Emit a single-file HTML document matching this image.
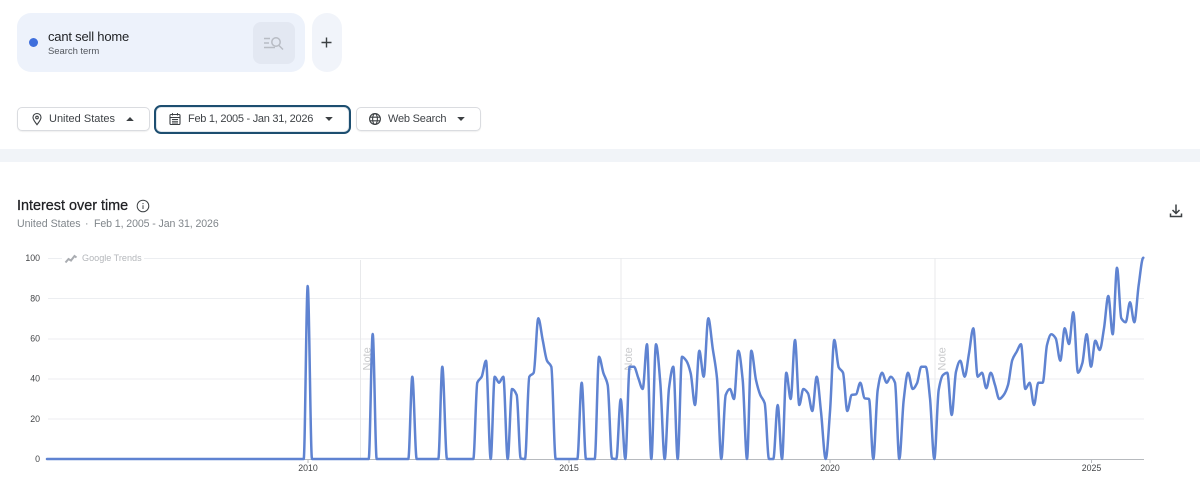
<!DOCTYPE html>
<html lang="en"><head><meta charset="utf-8"><title>Google Trends - cant sell home</title>
<style>
html,body{margin:0;padding:0;background:#fff}
body{width:1200px;height:487px;overflow:hidden;position:relative;font-family:"Liberation Sans",sans-serif;filter:blur(.35px)}
.a{position:absolute;white-space:nowrap}
.dd{position:absolute;top:107px;height:22px;border:1px solid #dadce0;border-radius:5px;background:#fff;box-shadow:0 1px 1px rgba(60,64,67,.08)}
.t{position:absolute;white-space:nowrap;font-size:11px;line-height:14px;color:#3f4347}
svg{position:absolute;overflow:visible}
</style></head><body>

<div class="a" style="left:17px;top:13px;width:288px;height:59px;border-radius:14px;background:#edf2fb"></div>
<div class="a" style="left:28.500px;top:37.500px;width:9px;height:9px;border-radius:50%;background:#3f6fdc"></div>
<div class="a" style="left:48px;top:29px;font-size:13px;line-height:15px;color:#1f2124;letter-spacing:-.2px">cant sell home</div>
<div class="a" style="left:48px;top:46px;font-size:9.500px;line-height:12px;color:#54585e;letter-spacing:-.05px">Search term</div>
<div class="a" style="left:253px;top:22px;width:42px;height:42px;border-radius:8px;background:#e3e8f2"></div>
<svg style="left:253px;top:22px" width="42" height="42" viewBox="0 0 42 42" fill="none" stroke="#b8bcc4" stroke-width="1.500">
<path d="M11 16.500h6M11 21h5M11 25.500h11"/><circle cx="23" cy="20" r="4.200"/><path d="M26 23.500l4 4"/></svg>
<div class="a" style="left:312px;top:13px;width:30px;height:59px;border-radius:15px;background:#f1f4fa"></div>
<svg style="left:320px;top:36px" width="13" height="13" viewBox="0 0 13 13" fill="none" stroke="#3c4043" stroke-width="1.400"><path d="M6.500 1.500v10M1.500 6.500h10"/></svg>

<div class="dd" style="left:17px;width:131px"></div>
<svg style="left:30px;top:112px" width="14" height="14" viewBox="0 0 14 14" fill="none" stroke="#3c4043" stroke-width="1.100"><path d="M7 1.500c-2.400 0-4 1.800-4 3.900C3 8 5.500 10.500 7 12.700c1.500-2.200 4-4.700 4-7.300 0-2.100-1.600-3.900-4-3.900z"/><circle cx="7" cy="5.500" r="1.300"/></svg>
<div class="t" style="left:49px;top:112px">United States</div>
<svg style="left:125px;top:116px" width="10" height="6" viewBox="0 0 10 6"><path d="M1.200 5L5 1l3.800 4z" fill="#3c4043"/></svg>

<div class="a" style="left:154px;top:105px;width:193px;height:25px;border:2px solid #1d4e70;border-radius:7px;background:#fff;box-shadow:inset 0 0 0 1px #dfe6ec"></div>
<svg style="left:168px;top:112px" width="14" height="14" viewBox="0 0 14 14" fill="none" stroke="#3c4043" stroke-width="1.100"><rect x="2" y="2.500" width="10" height="10" rx="1"/><path d="M2 5.500h10M4.500 1v2.500M9.500 1v2.500M4 7.500h6M4 9.300h6M4 11h6" stroke-width=".9"/></svg>
<div class="t" style="left:188px;top:112px;letter-spacing:-.27px">Feb 1, 2005 - Jan 31, 2026</div>
<svg style="left:324px;top:116px" width="10" height="6" viewBox="0 0 10 6"><path d="M1.200 1L5 5l3.800-4z" fill="#3c4043"/></svg>

<div class="dd" style="left:356px;width:123px"></div>
<svg style="left:368px;top:112px" width="14" height="14" viewBox="0 0 14 14" fill="none" stroke="#3c4043" stroke-width="1.100"><circle cx="7" cy="7" r="5.400"/><ellipse cx="7" cy="7" rx="2.400" ry="5.400"/><path d="M1.800 5.200h10.400M1.800 8.800h10.400"/></svg>
<div class="t" style="left:388px;top:112px;letter-spacing:-.2px">Web Search</div>
<svg style="left:456px;top:116px" width="10" height="6" viewBox="0 0 10 6"><path d="M1.200 1L5 5l3.800-4z" fill="#3c4043"/></svg>

<div class="a" style="left:0;top:149px;width:1200px;height:13px;background:#f1f4f8"></div>

<div class="a" style="left:17px;top:198px;font-size:14.400px;line-height:17px;color:#202124;-webkit-text-stroke:.25px #202124">Interest over time</div>
<svg style="left:136px;top:198.500px" width="14" height="14" viewBox="0 0 14 14" fill="none" stroke="#3c4043" stroke-width="1"><circle cx="7" cy="7" r="5.800"/><path d="M7 6.300v3.700M7 4v1.100"/></svg>
<div class="a" style="left:17px;top:217px;font-size:10.600px;line-height:14px;color:#80868b">United States</div>
<div class="a" style="left:85px;top:217px;font-size:10.600px;line-height:14px;color:#80868b">·</div>
<div class="a" style="left:94px;top:217px;font-size:10.600px;line-height:14px;color:#80868b;letter-spacing:-.1px">Feb 1, 2005 - Jan 31, 2026</div>
<svg style="left:1168px;top:203px" width="16" height="16" viewBox="0 0 16 16" fill="none" stroke="#3c4043" stroke-width="1.500"><path d="M8 1.500v8.500M4.500 7L8 10.500 11.500 7M2.500 10.500v3h11v-3"/></svg>

<svg style="left:0;top:0" width="1200" height="487" viewBox="0 0 1200 487">
<g stroke="#eceef1" stroke-width="1" fill="none">
<path d="M48 258.500H1144M48 298.500H1144M48 339H1144M48 379H1144M48 419H1144"/>
<path d="M360.500 260V459M621 258V459M935 258V459" stroke="#e8e9eb"/>
</g>
<rect x="62" y="252" width="82" height="13" fill="#fff"/>
<path d="M65.500 262.500l3-3.500 2.500 1.500 3.500-4.500 2 1.500" fill="none" stroke="#a9acb1" stroke-width="2"/>
<text x="82" y="261" font-size="9.100" fill="#b4b7bb" font-family="Liberation Sans, sans-serif">Google Trends</text>
<g font-size="11" fill="#c9cacc" font-family="Liberation Sans, sans-serif">
<text transform="translate(370.500 370.500) rotate(-90)">Note</text>
<text transform="translate(632 370.500) rotate(-90)">Note</text>
<text transform="translate(945.500 370.500) rotate(-90)">Note</text>
</g>
<path d="M47 459.500H1144" stroke="#b7babe" stroke-width="1"/>
<path d="M308 460v3M569 460v3M830 460v3M1091.500 460v3" stroke="#b7babe" stroke-width="1"/>
<g font-size="8.800" fill="#444649" font-family="Liberation Sans, sans-serif" text-anchor="end">
<text x="40" y="261">100</text><text x="40" y="301.300">80</text><text x="40" y="341.500">60</text><text x="40" y="381.700">40</text><text x="40" y="421.800">20</text><text x="40" y="462">0</text>
</g>
<g font-size="8.800" fill="#444649" font-family="Liberation Sans, sans-serif" text-anchor="middle">
<text x="308" y="471">2010</text><text x="569" y="471">2015</text><text x="830" y="471">2020</text><text x="1091.500" y="471">2025</text>
</g>
<path id="ln" fill="none" stroke="#5f83d1" stroke-width="2.500" stroke-linejoin="round" stroke-linecap="round" d="M47 459L303.700 459L307.700 286L312 459L368.700 459L372.700 334L376.700 459L408.300 459L412.300 376.700L416.700 459L438.300 459L442.300 366.700L447 459L473.300 459L477.300 382.700L481.700 376.700L486 360.700L490.700 459L494.700 376.700L499 382.700L503.300 376.700L507.700 459L512 389L516.700 395L520.700 458.500L525 459L529.300 376.700L533.700 372.700L538.300 318.300L542.700 340L547 360.700L551.300 366.700L555.700 459L577.300 459L581.700 382.700L586 459L594.700 459L599 356.700L603.300 372.700L607.700 385L612 458.500L616.300 459L620.700 399.300L625.300 459L629.700 366.700L634 366.700L638.300 378L642.700 389L647 344.300L651.300 459L656 344.300L660.300 382.700L664.700 459L669 388.300L673.300 366.700L677.700 459L682 356.700L686.300 360.700L690.700 373.300L695 405L699.300 350.700L703.700 376.700L708.300 318.300L712.700 348.300L717 378.300L721.300 459L725.700 395L730 389L734 399L738.300 350.700L742.700 380L747 459L751.300 350.700L756 380L760.300 395L764.700 403.300L769 459L773.300 459L777.700 405L782 459L786.300 372.700L790.700 399L795 340L799.300 405L803.300 389L808 393.300L812.300 411L816.700 376.700L821 411.700L825.700 459L830 411.700L834.300 340L838.700 367.300L843 372.700L847.300 411L851.700 395L856 394.300L860.300 382.700L864.700 398.300L869 399L873.300 459L877.700 390L882 372.700L886.700 382.700L890.700 376.700L895 382.700L899.300 459L903.700 400L908 372.700L912.700 389L917 383.300L921.300 366.700L925.700 366.700L930 398.300L934.300 459L938.700 390L943 375L947.300 372.700L951.700 415L956 371.700L960.300 360.700L964.700 376.700L969 353.300L973.300 328.300L977.700 376.700L982 372.700L986.300 388.300L990.700 372.700L995 385L999.300 399L1003.700 395L1008 385L1012.300 360L1016.700 351.700L1021 344.300L1025.300 389L1029.700 382.700L1034 405L1038.300 382.700L1042.700 382.700L1047 345L1051.300 334.300L1055.700 338.300L1060.300 360.700L1064.700 328.300L1069 344L1073.300 312.300L1078 372.700L1082.300 363.300L1086.700 334.300L1091 366.700L1095.300 340.700L1099.700 350L1104 328.300L1108.300 296L1112.700 334.300L1117 267.700L1121.300 318.300L1125.700 322.300L1130 302.300L1134.300 322.300L1138.700 285L1143.300 257.700"/>
</svg>
<script>
(function(){
var el=document.getElementById('ln');
var n=el.getAttribute('d').match(/-?[\d.]+/g).map(Number),p=[],i;
for(i=0;i<n.length;i+=2)p.push([n[i],n[i+1]]);
var m=[];
for(i=0;i<p.length;i++){
 if(i==0||i==p.length-1){m.push(0);continue;}
 var a=(p[i][1]-p[i-1][1])/(p[i][0]-p[i-1][0]),b=(p[i+1][1]-p[i][1])/(p[i+1][0]-p[i][0]);
 m.push(a*b<=0?0:2*a*b/(a+b));
}
var d='M'+p[0][0]+' '+p[0][1];
for(i=0;i<p.length-1;i++){
 var h=(p[i+1][0]-p[i][0])/3;
 d+='C'+(p[i][0]+h).toFixed(2)+' '+(p[i][1]+m[i]*h).toFixed(2)+' '+(p[i+1][0]-h).toFixed(2)+' '+(p[i+1][1]-m[i+1]*h).toFixed(2)+' '+p[i+1][0]+' '+p[i+1][1];
}
el.setAttribute('d',d);
})();
</script>
</body></html>
